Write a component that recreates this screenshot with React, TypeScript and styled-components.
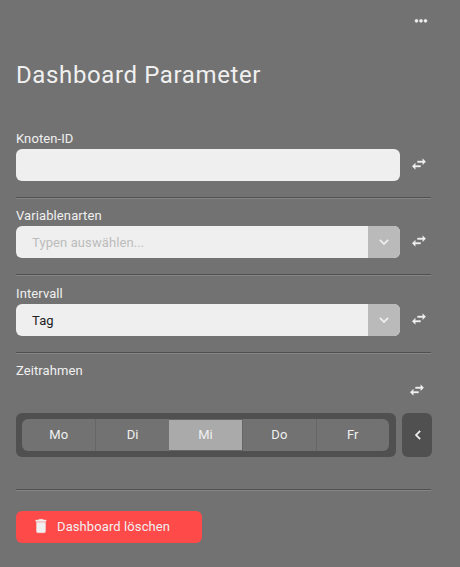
import React from 'react';
import styled, { createGlobalStyle } from 'styled-components';

const GlobalStyle = createGlobalStyle`
  *, *::before, *::after { box-sizing: border-box; }
  body {
    margin: 0;
    background: #727272;
    color: #f0f0f0;
    font-family: Roboto, sans-serif;
    font-size: 13px;
    letter-spacing: 0.1px;
  }
  button { font: inherit; letter-spacing: inherit; color: inherit; border: 0; padding: 0; }
`;

const Panel = styled.main`
  display: flex;
  flex-direction: column;
  height: 567px;
  padding: 11px 28px 0 16px;
`;

const MenuBar = styled.header`
  display: flex;
  justify-content: flex-end;
  height: 49px;
  padding-right: 2px;
`;

const Title = styled.h1`
  margin: 0;
  height: 69px;
  font-size: 24px;
  font-weight: 400;
  line-height: 30px;
  letter-spacing: 0.62px;
`;

const Section = styled.section<{ $height: number; $gap?: number }>`
  display: flex;
  flex-direction: column;
  flex: none;
  width: 415px;
  height: ${(p) => p.$height}px;
  padding-top: ${(p) => p.$gap ?? 0}px;
  border-bottom: 1px solid #858585;
  box-shadow: inset 0 -1px 0 #505050;
`;

const Label = styled.label`
  height: 20px;
  line-height: 19px;
`;

const FieldRow = styled.div`
  display: flex;
  gap: 10px;
`;

const Field = styled.div`
  display: flex;
  width: 384px;
  height: 32px;
  overflow: hidden;
  border-radius: 6px;
  background: #efefef;
`;

const TextInput = styled.input`
  flex: 1;
  border: 0;
  outline: 0;
  background: transparent;
  padding: 0 16px;
  font: inherit;
`;

const Value = styled.span<{ $placeholder?: boolean }>`
  flex: 1;
  padding-left: 16px;
  line-height: 33px;
  color: ${(p) => (p.$placeholder ? '#bcbcbc' : '#222')};
`;

const IconButton = styled.button`
  display: flex;
  flex: none;
  background: transparent;
`;

const RowSwap = styled(IconButton)`
  padding-top: 6px;
`;

const DropButton = styled.button`
  display: flex;
  align-items: center;
  justify-content: center;
  width: 32px;
  background: #bababa;
`;

const SwapLine = styled.div`
  display: flex;
  justify-content: flex-end;
  align-items: flex-start;
  height: 32px;
  padding-right: 5px;
`;

const TimeRow = styled.div`
  display: flex;
  gap: 6px;
  width: 416px;
`;

const DayFrame = styled.div`
  width: 380px;
  height: 44px;
  padding: 6px 7px 6px 6px;
  border-radius: 6px;
  background: #505050;
`;

const DayGroup = styled.div`
  display: grid;
  grid-template-columns: repeat(5, 1fr);
  height: 32px;
  overflow: hidden;
  border-radius: 6px;
  background: #727272;
`;

const Day = styled.button<{ $active: boolean }>`
  background: ${(p) => (p.$active ? '#aaaaaa' : 'transparent')};
  border: solid #666;
  border-width: ${(p) => (p.$active ? '1px 0' : '0 0 0 1px')};
  line-height: 30px;
  &:first-child { border-left: 0; }
`;

const BackButton = styled.button`
  display: flex;
  align-items: center;
  justify-content: center;
  width: 30px;
  height: 44px;
  padding-left: 2px;
  border-radius: 6px;
  background: #505050;
`;

const DeleteButton = styled.button`
  display: flex;
  align-items: center;
  gap: 7px;
  width: 186px;
  height: 32px;
  margin-top: 20px;
  padding: 0 0 2px 16px;
  border-radius: 6px;
  background: #ff4a4a;
`;

const icons = {
  dots: 'M18 11a2.1 2.1 0 1 1 0 4.2 2.1 2.1 0 0 1 0-4.2M12 11a2.1 2.1 0 1 1 0 4.2 2.1 2.1 0 0 1 0-4.2M6 11a2.1 2.1 0 1 1 0 4.2A2.1 2.1 0 0 1 6 11z',
  swap: 'M21 9l-4-4v3h-7v2h7v3M7 11l-4 4 4 4v-3h7v-2H7v-3z',
  down: 'M7.41 8.58L12 13.17l4.59-4.59L18 10l-6 6-6-6 1.41-1.42z',
  left: 'M15.41 16.58L10.83 12l4.58-4.59L14 6l-6 6 6 6 1.41-1.42z',
  trash: 'M19 4h-3.5l-1-1h-5l-1 1H5v2h14M6 19a2 2 0 0 0 2 2h8a2 2 0 0 0 2-2V7H6v12z',
};

const Glyph = styled.svg`
  width: 18px;
  height: 18px;
  fill: #f0f0f0;
  stroke: #f0f0f0;
  stroke-width: 0.5;
`;

const Icon = ({ name }: { name: keyof typeof icons }) => (
  <Glyph viewBox="0 0 24 24" aria-hidden="true">
    <path d={icons[name]} />
  </Glyph>
);

const Select = ({ text, placeholder }: { text: string; placeholder?: boolean }) => (
  <FieldRow>
    <Field>
      <Value $placeholder={placeholder}>{text}</Value>
      <DropButton aria-label="Öffnen"><Icon name="down" /></DropButton>
    </Field>
    <RowSwap aria-label="Tauschen"><Icon name="swap" /></RowSwap>
  </FieldRow>
);

const days = ['Mo', 'Di', 'Mi', 'Do', 'Fr'];

export default function App() {
  return (
    <>
      <GlobalStyle />
      <Panel>
        <MenuBar>
          <IconButton aria-label="Menü"><Icon name="dots" /></IconButton>
        </MenuBar>
        <Title>Dashboard Parameter</Title>
        <Section $height={70}>
          <Label htmlFor="node">Knoten-ID</Label>
          <FieldRow>
            <Field><TextInput id="node" /></Field>
            <RowSwap aria-label="Tauschen"><Icon name="swap" /></RowSwap>
          </FieldRow>
        </Section>
        <Section $height={77} $gap={7}>
          <Label>Variablenarten</Label>
          <Select text="Typen auswählen..." placeholder />
        </Section>
        <Section $height={78} $gap={8}>
          <Label>Intervall</Label>
          <Select text="Tag" />
        </Section>
        <Section $height={137} $gap={7}>
          <Label>Zeitrahmen</Label>
          <SwapLine>
            <IconButton aria-label="Tauschen"><Icon name="swap" /></IconButton>
          </SwapLine>
          <TimeRow>
            <DayFrame>
              <DayGroup>
                {days.map((day) => (
                  <Day key={day} $active={day === 'Mi'}>{day}</Day>
                ))}
              </DayGroup>
            </DayFrame>
            <BackButton aria-label="Zurück"><Icon name="left" /></BackButton>
          </TimeRow>
        </Section>
        <DeleteButton><Icon name="trash" />Dashboard löschen</DeleteButton>
      </Panel>
    </>
  );
}
